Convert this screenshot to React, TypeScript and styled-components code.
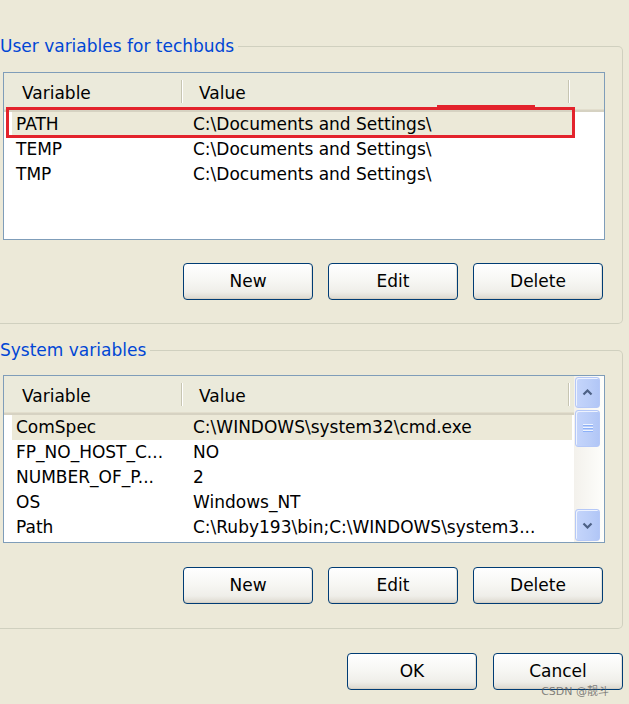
import React, { type FC } from 'react';
import styled, { createGlobalStyle } from 'styled-components';

const FONT = `"DejaVu Sans", "Noto Sans CJK SC", sans-serif`;

const GlobalStyle = createGlobalStyle`
  html, body {
    margin: 0;
    padding: 0;
  }

  body {
    width: 629px;
    height: 704px;
    overflow: hidden;
    background: #ece9d8;
    font-family: ${FONT};
    font-size: 17px;
    color: #000;
  }
`;

const Page = styled.div`
  position: relative;
  display: flex;
  flex-direction: column;
  box-sizing: border-box;
  width: 629px;
  height: 704px;
  padding: 36px 6px 0 0;
`;

const Group = styled.fieldset<{ $gap?: number }>`
  margin: ${(p) => p.$gap ?? 0}px 0 0 0;
  padding: 0;
  min-width: 0;
  border: 1px solid #d0d0bf;
  border-left: none;
  border-radius: 0 5px 5px 0;
`;

const Legend = styled.legend`
  margin: 0;
  padding: 0 4px 0 0;
  font-size: 17px;
  line-height: 20px;
  color: #0046d5;
`;

const GroupBody = styled.div<{ $top: number; $bottom: number }>`
  display: flex;
  flex-direction: column;
  padding: ${(p) => p.$top}px 0 ${(p) => p.$bottom}px 3px;
`;

const List = styled.div`
  display: flex;
  box-sizing: border-box;
  width: 602px;
  height: 168px;
  border: 1px solid #7f9db9;
  background: #fff;
`;

const ListMain = styled.div`
  display: flex;
  flex-direction: column;
  flex: 1;
  min-width: 0;
`;

const Header = styled.div`
  display: flex;
  flex-shrink: 0;
  box-sizing: border-box;
  height: 39px;
  padding-top: 4px;
  background: #ebeadb;
  border-bottom: 2px solid #d6d2c2;
  box-shadow: inset 0 -1px #e2decd;
`;

const HeadCell = styled.div<{ $w?: number; $pad?: number }>`
  position: relative;
  box-sizing: border-box;
  ${(p) => (p.$w ? `width: ${p.$w}px; flex-shrink: 0;` : 'flex: 1; min-width: 0;')}
  padding-left: ${(p) => p.$pad ?? 0}px;
  line-height: 32px;
  white-space: nowrap;

  &::after {
    content: '';
    display: ${(p) => (p.$w ? 'block' : 'none')};
    position: absolute;
    right: 0;
    top: 3px;
    bottom: 7px;
    width: 1px;
    background: #c7c5b2;
    box-shadow: 1px 0 #fff;
  }
`;

const Rows = styled.div`
  display: flex;
  flex-direction: column;
  padding-left: 8px;
`;

const Row = styled.div<{ $selected?: boolean }>`
  position: relative;
  display: flex;
  width: 560px;
  height: 25px;
  line-height: 25px;
  background: ${(p) => (p.$selected ? '#ece9d8' : 'transparent')};
  white-space: nowrap;
`;

const NameCell = styled.div`
  box-sizing: border-box;
  width: 170px;
  flex-shrink: 0;
  padding-left: 4px;
  overflow: hidden;
`;

const ValueCell = styled.div`
  flex: 1;
  padding-left: 11px;
`;

const RedMark = styled.div`
  position: absolute;
  top: -5px;
  left: -6px;
  right: -3px;
  bottom: -1px;
  border: 3px solid #e3232c;
  pointer-events: none;

  &::before {
    content: '';
    position: absolute;
    top: -5px;
    left: 428px;
    width: 98px;
    height: 5px;
    background: #e3232c;
  }
`;

const ScrollBar = styled.div`
  display: flex;
  flex-direction: column;
  flex-shrink: 0;
  width: 30px;
  padding: 1px 4px 1px 1px;
  box-sizing: border-box;
  background: linear-gradient(90deg, #f3f1ec, #fefefb);
`;

const ScrollButton = styled.div<{ $h: number }>`
  display: flex;
  align-items: center;
  justify-content: center;
  box-sizing: border-box;
  height: ${(p) => p.$h}px;
  border: 1px solid #b5c8f7;
  border-radius: 3px;
  background: linear-gradient(90deg, #c5d5fb, #bacdf8 60%, #b1c6f6);
  box-shadow: inset 1px 1px #eef3fe;
`;

const Track = styled.div<{ $h: number }>`
  height: ${(p) => p.$h}px;
`;

const Grip = styled.div`
  width: 10px;
  height: 9px;
  background: repeating-linear-gradient(
    180deg,
    #eef4fe 0 1px,
    #8cb0f8 1px 2px,
    transparent 2px 3px
  );
`;

const ButtonRow = styled.div<{ $top: number; $right: number; $gap: number }>`
  display: flex;
  justify-content: flex-end;
  gap: ${(p) => p.$gap}px;
  margin-top: ${(p) => p.$top}px;
  padding-right: ${(p) => p.$right}px;
`;

const Button = styled.button`
  box-sizing: border-box;
  width: 130px;
  height: 37px;
  padding: 0 0 2px;
  border: 1px solid #003c74;
  border-radius: 4px;
  background: linear-gradient(
    180deg,
    #ffffff 0%,
    #f7f7f4 45%,
    #efeee9 80%,
    #dcd8ce 100%
  );
  box-shadow: inset 0 -1px #d6d0c5, inset -1px 0 #e3e1d8;
  font-family: ${FONT};
  font-size: 17px;
  line-height: 20px;
  color: #000;
`;

const Watermark = styled.div`
  position: absolute;
  right: 20px;
  bottom: 6px;
  font-family: ${FONT};
  font-size: 11px;
  line-height: 12px;
  color: rgba(90, 90, 90, 0.75);
  white-space: nowrap;
`;

type Variable = { name: string; value: string };

const userVars: Variable[] = [
  { name: 'PATH', value: 'C:\\Documents and Settings\\' },
  { name: 'TEMP', value: 'C:\\Documents and Settings\\' },
  { name: 'TMP', value: 'C:\\Documents and Settings\\' },
];

const systemVars: Variable[] = [
  { name: 'ComSpec', value: 'C:\\WINDOWS\\system32\\cmd.exe' },
  { name: 'FP_NO_HOST_C...', value: 'NO' },
  { name: 'NUMBER_OF_P...', value: '2' },
  { name: 'OS', value: 'Windows_NT' },
  { name: 'Path', value: 'C:\\Ruby193\\bin;C:\\WINDOWS\\system3...' },
];

const Arrow: FC<{ down?: boolean }> = ({ down }) => (
  <svg width="11" height="7" viewBox="0 0 11 7">
    <path
      d={down ? 'M1.5 1.5 L5.5 5.5 L9.5 1.5' : 'M1.5 5.5 L5.5 1.5 L9.5 5.5'}
      fill="none"
      stroke="#4d6185"
      strokeWidth="2.2"
    />
  </svg>
);

const VarList: FC<{ items: Variable[]; marked?: boolean; scroll?: boolean }> = ({
  items,
  marked,
  scroll,
}) => (
  <List>
    <ListMain>
      <Header>
        <HeadCell $w={178} $pad={18}>
          Variable
        </HeadCell>
        <HeadCell $w={387} $pad={17}>
          Value
        </HeadCell>
        <HeadCell />
      </Header>
      <Rows>
        {items.map((v, ind) => (
          <Row key={ind} $selected={ind === 0}>
            <NameCell>{v.name}</NameCell>
            <ValueCell>{v.value}</ValueCell>
            {marked && ind === 0 && <RedMark />}
          </Row>
        ))}
      </Rows>
    </ListMain>
    {scroll && (
      <ScrollBar>
        <ScrollButton $h={31}>
          <Arrow />
        </ScrollButton>
        <Track $h={2} />
        <ScrollButton $h={37}>
          <Grip />
        </ScrollButton>
        <Track $h={62} />
        <ScrollButton $h={32}>
          <Arrow down />
        </ScrollButton>
      </ScrollBar>
    )}
  </List>
);

const ActionButtons: FC<{ top: number }> = ({ top }) => (
  <ButtonRow $top={top} $right={19} $gap={15}>
    <Button>New</Button>
    <Button>Edit</Button>
    <Button>Delete</Button>
  </ButtonRow>
);

const App: FC = () => (
  <>
    <GlobalStyle />
    <Page>
      <Group>
        <Legend>User variables for techbuds</Legend>
        <GroupBody $top={16} $bottom={23}>
          <VarList items={userVars} marked />
          <ActionButtons top={23} />
        </GroupBody>
      </Group>
      <Group $gap={16}>
        <Legend>System variables</Legend>
        <GroupBody $top={15} $bottom={24}>
          <VarList items={systemVars} scroll />
          <ActionButtons top={24} />
        </GroupBody>
      </Group>
      <ButtonRow $top={24} $right={0} $gap={16}>
        <Button>OK</Button>
        <Button>Cancel</Button>
      </ButtonRow>
      <Watermark>CSDN @靓斗</Watermark>
    </Page>
  </>
);

export default App;
